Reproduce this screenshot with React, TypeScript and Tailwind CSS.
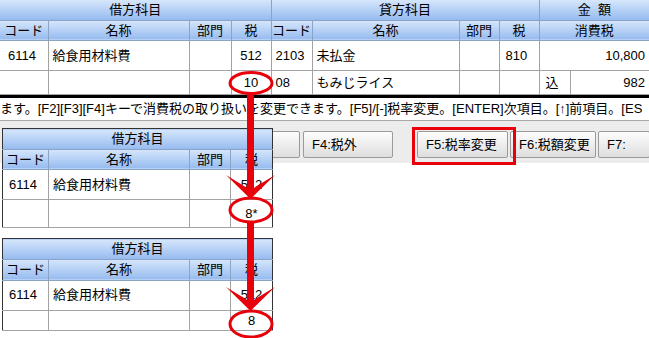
const font = "font-['Liberation_Sans','Noto_Sans_CJK_JP',sans-serif]";

const th =
  "bg-gradient-to-b from-[#d6e6fb] to-[#96bbef] border-r border-b border-[#8aa4c8] font-normal text-center p-0 whitespace-nowrap";
const td = "border-r border-b border-[#a3a3a3] p-0 whitespace-nowrap";

function TopTable() {
  return (
    <table className="table-fixed border-collapse w-[649px]">
      <colgroup>
        <col className="w-[48px]" />
        <col className="w-[141px]" />
        <col className="w-[42px]" />
        <col className="w-[40px]" />
        <col className="w-[41px]" />
        <col className="w-[147px]" />
        <col className="w-[40px]" />
        <col className="w-[40px]" />
        <col className="w-[31px]" />
        <col className="w-[79px]" />
      </colgroup>
      <tbody>
        <tr className="h-[20px]">
          <th colSpan={4} className={th}>借方科目</th>
          <th colSpan={4} className={th}>貸方科目</th>
          <th colSpan={2} className={th + " border-r-0"}>金&nbsp;&nbsp;額</th>
        </tr>
        <tr className="h-[19px]">
          <th className={th}>コード</th>
          <th className={th}>名称</th>
          <th className={th}>部門</th>
          <th className={th}>税</th>
          <th className={th}>コード</th>
          <th className={th}>名称</th>
          <th className={th}>部門</th>
          <th className={th}>税</th>
          <th colSpan={2} className={th + " border-r-0"}>消費税</th>
        </tr>
        <tr className="h-[30px]">
          <td className={td + " pl-[8px]"}>6114</td>
          <td className={td + " pl-[4px]"}>給食用材料費</td>
          <td className={td}></td>
          <td className={td + " text-center"}>512</td>
          <td className={td + " pl-[4px]"}>2103</td>
          <td className={td + " pl-[4px]"}>未払金</td>
          <td className={td}></td>
          <td className={td + " pl-[6px]"}>810</td>
          <td colSpan={2} className={td + " border-r-0 text-right pr-[4px]"}>10,800</td>
        </tr>
        <tr className="h-[24px]">
          <td className={td}></td>
          <td className={td}></td>
          <td className={td}></td>
          <td className={td + " text-center"}>10</td>
          <td className={td + " pl-[4px]"}>08</td>
          <td className={td + " pl-[4px]"}>もみじライス</td>
          <td className={td}></td>
          <td className={td}></td>
          <td className={td + " pl-[6px]"}>込</td>
          <td className={td + " border-r-0 text-right pr-[4px]"}>982</td>
        </tr>
      </tbody>
    </table>
  );
}

function SmallTable({ mark, rows }: { mark: string; rows: [number, number, number, number] }) {
  return (
    <table className="table-fixed border-collapse w-[270px] border border-[#333]">
      <colgroup>
        <col className="w-[46px]" />
        <col className="w-[141px]" />
        <col className="w-[41px]" />
        <col className="w-[42px]" />
      </colgroup>
      <tbody>
        <tr style={{ height: rows[0] }}>
          <th colSpan={4} className={th + " border-r-0"}>借方科目</th>
        </tr>
        <tr style={{ height: rows[1] }}>
          <th className={th}>コード</th>
          <th className={th}>名称</th>
          <th className={th}>部門</th>
          <th className={th + " border-r-0"}>税</th>
        </tr>
        <tr style={{ height: rows[2] }} className="bg-white">
          <td className={td + " pl-[6px]"}>6114</td>
          <td className={td + " pl-[4px]"}>給食用材料費</td>
          <td className={td}></td>
          <td className={td + " border-r-0 text-center"}>512</td>
        </tr>
        <tr style={{ height: rows[3] }} className="bg-white">
          <td className={td}></td>
          <td className={td}></td>
          <td className={td}></td>
          <td className={td + " border-r-0 text-center"}>{mark}</td>
        </tr>
      </tbody>
    </table>
  );
}

const btn =
  "h-[27px] shrink-0 rounded-[2px] border border-[#9a9a9a] bg-gradient-to-b from-[#fdfdfd] to-[#dedede] pl-[8px] text-left leading-[25px] whitespace-nowrap";

function Arrow({ top, tip }: { top: number; tip: number }) {
  const wing = tip - 24;
  const notch = tip - 9;
  return (
    <g fill="#e8000b">
      <rect x={247} y={top} width={7} height={notch - top + 2} />
      <polygon points={`226,${wing} 250.5,${tip} 275,${wing} 250.5,${notch}`} />
    </g>
  );
}

export default function App() {
  return (
    <div className={`relative w-[649px] h-[338px] overflow-hidden bg-white text-[13px] text-black ${font}`}>
      <TopTable />
      <div className="h-[3px] bg-black" />
      <div className="h-[23px] border-b border-[#a8a8a8] whitespace-nowrap overflow-hidden text-[13px] leading-[22px]">
        ます。[F2][F3][F4]キーで消費税の取り扱いを変更できます。[F5]/[-]税率変更。[ENTER]次項目。[↑]前項目。[ES
      </div>
      <div className="h-[42px] bg-[#ececec] flex items-start pt-[10px] overflow-hidden">
        <div className={btn + " ml-[210px] w-[90px]"}>F3:税込</div>
        <div className={btn + " ml-[3px] w-[90px]"}>F4:税外</div>
        <div className={btn + " ml-[24px] w-[91px]"}>F5:税率変更</div>
        <div className={btn + " ml-[2px] w-[86px]"}>F6:税額変更</div>
        <div className={btn + " ml-[2px] w-[52px]"}>F7:</div>
      </div>

      <div className="absolute left-[2px] top-[128px]">
        <SmallTable mark="8*" rows={[20, 19, 30, 28]} />
      </div>
      <div className="absolute left-[2px] top-[238px]">
        <SmallTable mark="8" rows={[19, 21, 30, 20]} />
      </div>

      <svg className="absolute inset-0 pointer-events-none" width={649} height={338}>
        <Arrow top={94} tip={199} />
        <Arrow top={222} tip={311} />
        <g fill="none" stroke="#e8000b" strokeWidth={3}>
          <ellipse cx={251} cy={83} rx={21} ry={10.5} />
          <ellipse cx={251} cy={210} rx={21} ry={12} />
          <ellipse cx={251} cy={324} rx={21} ry={13} />
          <rect x={413.5} y={128.5} width={101} height={35} />
        </g>
      </svg>
    </div>
  );
}
